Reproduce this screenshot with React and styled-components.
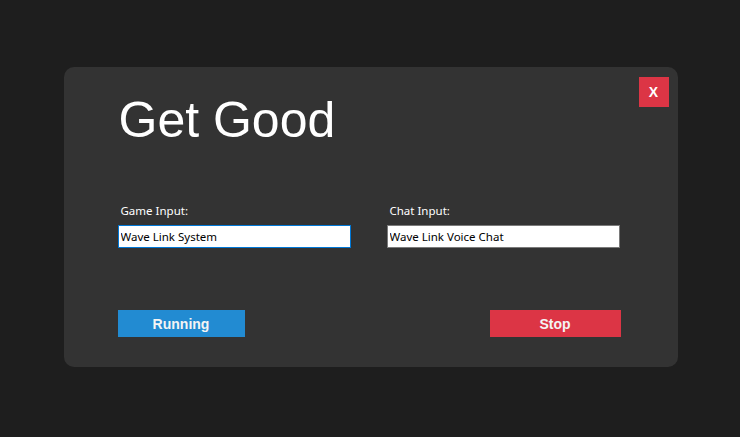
import React from "react";
import styled, { createGlobalStyle } from "styled-components";

const Global = createGlobalStyle`
  html, body { margin: 0; padding: 0; background: #1e1e1e; }
  #root { min-height: 100vh; }
  * { box-sizing: border-box; }
`;

const Page = styled.div`
  min-height: 100vh;
  display: flex;
  align-items: center;
  justify-content: center;
  padding: 0 0 3px 1px;
`;

const Card = styled.div`
  position: relative;
  width: 614px;
  background: #333333;
  border-radius: 10px;
  padding: 29px 57px 30px 54px;
  display: flex;
  flex-direction: column;
`;

const CloseButton = styled.button`
  position: absolute;
  top: 10px;
  right: 9px;
  width: 30px;
  height: 30px;
  border: none;
  padding: 0;
  background: #dc3545;
  color: #ffffff;
  font-family: "Liberation Sans", Arial, sans-serif;
  font-weight: 700;
  font-size: 14px;
  cursor: pointer;
`;

const Title = styled.h1`
  margin: 0 0 0 1px;
  font-family: "Liberation Sans", Arial, sans-serif;
  font-weight: 400;
  font-size: 50px;
  line-height: 48px;
  color: #ffffff;
`;

const Fields = styled.div`
  margin-top: 59px;
  display: grid;
  grid-template-columns: 233px 233px;
  column-gap: 36px;
`;

const Field = styled.div`
  display: flex;
  flex-direction: column;
`;

const Label = styled.label`
  font-family: "Noto Sans", "Open Sans", sans-serif;
  font-size: 11.5px;
  line-height: 16px;
  height: 16px;
  color: #ffffff;
  padding-left: 3px;
  margin-bottom: 6px;
`;

const Input = styled.input`
  display: block;
  width: 233px;
  height: 23px;
  margin: 0;
  padding: 0 2px;
  background: #ffffff;
  color: #000000;
  border: 1px solid ${(p) => (p.$active ? "#0078d7" : "#7a7a7a")};
  border-radius: 0;
  outline: none;
  font-family: "Noto Sans", "Open Sans", sans-serif;
  font-size: 11.5px;
`;

const Actions = styled.div`
  margin-top: 62px;
  display: flex;
  justify-content: space-between;
`;

const ActionButton = styled.button`
  display: block;
  width: ${(p) => p.$width}px;
  height: 27px;
  border: none;
  padding: 0;
  background: ${(p) => p.$color};
  color: #f4f4f4;
  font-family: "Liberation Sans", Arial, sans-serif;
  font-weight: 700;
  font-size: 14px;
  cursor: pointer;
`;

export default function App() {
  return (
    <>
      <Global />
      <Page>
        <Card>
          <CloseButton>X</CloseButton>
          <Title>Get Good</Title>
          <Fields>
            <Field>
              <Label>Game Input:</Label>
              <Input $active defaultValue="Wave Link System" />
            </Field>
            <Field>
              <Label>Chat Input:</Label>
              <Input defaultValue="Wave Link Voice Chat" />
            </Field>
          </Fields>
          <Actions>
            <ActionButton $width={127} $color="#228bd2">Running</ActionButton>
            <ActionButton $width={131} $color="#dc3545">Stop</ActionButton>
          </Actions>
        </Card>
      </Page>
    </>
  );
}
